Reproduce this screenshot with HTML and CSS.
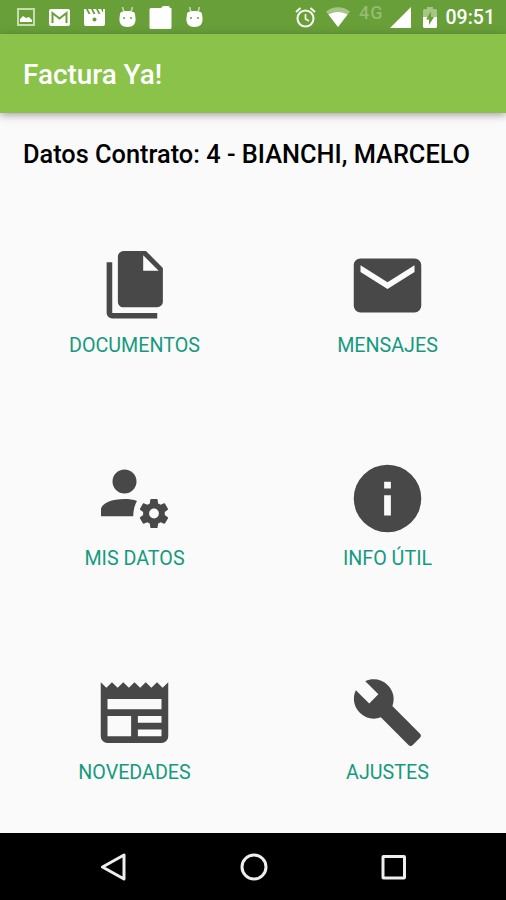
FILE: index.html
```html
<!DOCTYPE html>
<html lang="es">
<head>
  <meta charset="UTF-8">
  <title>Factura Ya!</title>
  <link rel="stylesheet" href="styles.css">
</head>
<body>
  <div class="status-bar">
    <div class="notifications">
      <svg width="18" height="18" viewBox="0 0 18 18">
        <rect x="1" y="1" width="16" height="16" fill="none" stroke="#c6ddb0" stroke-width="2"/>
        <path d="M3 14V11l3-3 3 2 3-1 3 3v2z" fill="#fff"/>
      </svg>
      <svg width="21" height="17" viewBox="0 0 21 17">
        <rect width="21" height="17" rx="2" fill="#fff"/>
        <path d="M3.500 14V4l7 5.500L17.500 4v10" fill="none" stroke="#689f38" stroke-width="2"/>
      </svg>
      <svg width="21" height="18" viewBox="0 0 21 18">
        <path d="M0 1h2l2.500 5h2L4 1h3l2.500 5h2L9 1h3l2.500 5h2L14 1h3l2 4V1h2v15a2 2 0 0 1-2 2H2a2 2 0 0 1-2-2z" fill="#fff"/>
        <circle cx="10.500" cy="11.500" r="2" fill="#689f38"/>
      </svg>
      <svg width="17" height="20" viewBox="0 0 17 20">
        <path d="M3.500 0L5 5M13.500 0L12 5" stroke="#c6ddb0" stroke-width="1.500"/>
        <path d="M1 7c0-2 3-3 7.500-3S16 5 16 7l.6 5c0 5-2.600 8-8.100 8S.4 17 .4 12z" fill="#fff"/>
        <circle cx="5" cy="11" r="1" fill="#689f38"/><circle cx="12" cy="11" r="1" fill="#689f38"/>
      </svg>
      <svg class="folder" width="24" height="23" viewBox="0 0 24 23">
        <path d="M2 2h10l2-2h6l1 2h1.500v19.500a1.500 1.500 0 0 1-1.500 1.500H2a1.500 1.500 0 0 1-1.500-1.500V3.500A1.500 1.500 0 0 1 2 2z" fill="#fff"/>
      </svg>
      <svg width="17" height="20" viewBox="0 0 17 20">
        <path d="M3.500 0L5 5M13.500 0L12 5" stroke="#c6ddb0" stroke-width="1.500"/>
        <path d="M1 7c0-2 3-3 7.500-3S16 5 16 7l.6 5c0 5-2.600 8-8.100 8S.4 17 .4 12z" fill="#fff"/>
        <circle cx="5" cy="11" r="1" fill="#689f38"/><circle cx="12" cy="11" r="1" fill="#689f38"/>
      </svg>
    </div>
    <div class="system">
      <svg class="alarm" width="21" height="21" viewBox="0 0 21 21" fill="none" stroke="#f4f9ef">
        <circle cx="10.500" cy="11.500" r="8" stroke-width="2.100"/>
        <path d="M10.500 7v5l3.500 2" stroke-width="1.700"/>
        <path d="M1 5l4.500-4M20 5l-4.500-4" stroke-width="2"/>
      </svg>
      <svg class="wifi" width="24" height="20" viewBox="0 0 24 20">
        <path d="M0 4.500C7-1.200 17-1.200 24 4.500L12 20z" fill="#a4c687"/>
        <path d="M2.500 7.500c6-3.500 13-3.500 19 0L12 20z" fill="#fff"/>
      </svg>
      <span class="network">4G</span>
      <svg class="signal" width="21" height="21" viewBox="0 0 21 21">
        <path d="M21 0v21H0z" fill="#fff"/>
      </svg>
      <svg class="battery" width="14" height="21" viewBox="0 0 14 21">
        <path d="M4 0h6v2h2.500A1.500 1.500 0 0 1 14 3.500V10H0V3.500A1.500 1.500 0 0 1 1.500 2H4z" fill="#a4c687"/>
        <path d="M0 10h14v9.500a1.500 1.500 0 0 1-1.500 1.500h-11A1.500 1.500 0 0 1 0 19.500z" fill="#fff"/>
        <path d="M8 4.500L3 12.500h3V18l5-8H8z" fill="#689f38"/>
      </svg>
      <span class="clock">09:51</span>
    </div>
  </div>

  <header class="app-bar">
    <h1>Factura Ya!</h1>
  </header>

  <main>
    <h2>Datos Contrato: 4 - BIANCHI, MARCELO</h2>

    <div class="menu">
      <div class="item">
        <div class="icon">
          <svg width="67.500" height="67.500" viewBox="0 0 24 24">
            <path d="M15,7H20.500L15,1.500V7M8,0H16L22,6V18A2,2 0 0,1 20,20H8C6.890,20 6,19.100 6,18V2A2,2 0 0,1 8,0M4,4V22H20V24H4A2,2 0 0,1 2,22V4H4Z"/>
          </svg>
        </div>
        <span class="label">DOCUMENTOS</span>
      </div>

      <div class="item">
        <div class="icon">
          <svg width="81" height="81" viewBox="0 0 24 24">
            <path d="M20,8L12,13L4,8V6L12,11L20,6M20,4H4C2.890,4 2,4.890 2,6V18A2,2 0 0,0 4,20H20A2,2 0 0,0 22,18V6C22,4.890 21.100,4 20,4Z"/>
          </svg>
        </div>
        <span class="label">MENSAJES</span>
      </div>

      <div class="item">
        <div class="icon">
          <svg width="81" height="81" viewBox="0 0 81 81">
            <circle cx="30.500" cy="23.500" r="12"/>
            <path d="M7 58.200V51C8 45 18 41 30.500 41c4.500 0 9 .6 12.500 2-2.300 4.200-3.800 9.200-3.800 15.200z"/>
            <!-- engranaje -->
            <g transform="translate(60 55.500) scale(2.900) translate(-18 -17)">
              <path fill-rule="evenodd" d="M17 12C16.870 12 16.760 12.090 16.740 12.210L16.550 13.530C16.250 13.660 15.960 13.820 15.700 14L14.460 13.500C14.350 13.500 14.220 13.500 14.150 13.630L13.150 15.360C13.090 15.470 13.110 15.600 13.210 15.680L14.270 16.500C14.240 16.830 14.240 17.170 14.270 17.500L13.210 18.320C13.120 18.400 13.090 18.530 13.150 18.640L14.150 20.370C14.210 20.500 14.340 20.500 14.460 20.500L15.700 20C15.960 20.180 16.240 20.350 16.550 20.470L16.740 21.790C16.760 21.910 16.860 22 17 22H19C19.110 22 19.220 21.910 19.240 21.790L19.430 20.470C19.730 20.340 20 20.180 20.270 20L21.500 20.500C21.630 20.500 21.760 20.500 21.830 20.370L22.830 18.640C22.890 18.530 22.860 18.400 22.770 18.320L21.700 17.500C21.740 17.170 21.740 16.830 21.700 16.500L22.760 15.680C22.850 15.600 22.880 15.470 22.820 15.360L21.820 13.630C21.760 13.500 21.630 13.500 21.500 13.500L20.270 14C20 13.820 19.730 13.650 19.420 13.530L19.230 12.210C19.220 12.090 19.110 12 19 12H17M18 15.300A1.700 1.700 0 0 1 18 18.700A1.700 1.700 0 0 1 18 15.300Z"/>
            </g>
          </svg>
        </div>
        <span class="label">MIS DATOS</span>
      </div>

      <div class="item">
        <div class="icon">
          <svg width="81" height="81" viewBox="0 0 24 24">
            <path d="M13,9H11V7H13M13,17H11V11H13M12,2A10,10 0 0,0 2,12A10,10 0 0,0 12,22A10,10 0 0,0 22,12A10,10 0 0,0 12,2Z"/>
          </svg>
        </div>
        <span class="label">INFO ÚTIL</span>
      </div>

      <div class="item">
        <div class="icon">
          <svg width="81" height="81" viewBox="0 0 24 24">
            <path d="M20,11H4V8H20M20,15H13V13H20M20,19H13V17H20M11,19H4V13H11M20.330,4.670L18.670,3L17,4.670L15.330,3L13.670,4.670L12,3L10.330,4.670L8.670,3L7,4.670L5.330,3L3.670,4.670L2,3V19A2,2 0 0,0 4,21H20A2,2 0 0,0 22,19V3L20.330,4.670Z"/>
          </svg>
        </div>
        <span class="label">NOVEDADES</span>
      </div>

      <div class="item">
        <div class="icon">
          <svg width="73" height="73" viewBox="0 0 24 24">
            <path d="M22.700,19L13.600,9.900C14.500,7.600 14,4.900 12.100,3C10.100,1 7.100,0.600 4.700,1.700L9,6L6,9L1.600,4.700C0.400,7.100 0.900,10.100 2.900,12.100C4.800,14 7.500,14.500 9.800,13.600L18.900,22.700C19.300,23.100 19.900,23.100 20.300,22.700L22.600,20.400C23.100,20 23.100,19.300 22.700,19Z"/>
          </svg>
        </div>
        <span class="label">AJUSTES</span>
      </div>
    </div>
  </main>

  <nav class="nav-bar">
    <svg width="28" height="28" viewBox="0 0 28 28">
      <path d="M25 2v24L3.500 14z"/>
    </svg>
    <svg width="28" height="28" viewBox="0 0 28 28">
      <circle cx="14" cy="14" r="12"/>
    </svg>
    <svg width="28" height="28" viewBox="0 0 28 28">
      <rect x="3" y="3.500" width="21.500" height="21.500" rx=".5"/>
    </svg>
  </nav>
</body>
</html>
```

FILE: styles.css
```css
* {
  box-sizing: border-box;
}

body {
  margin: 0;
  height: 900px;
  display: flex;
  flex-direction: column;
  overflow: hidden;
  background: #fafafa;
  font-family: Roboto, "Liberation Sans", sans-serif;
}

svg {
  display: block;
  flex-shrink: 0;
}

/* barra de estado */
.status-bar {
  height: 34px;
  flex-shrink: 0;
  display: flex;
  justify-content: space-between;
  background: #689f38;
}

.notifications {
  display: flex;
  align-items: center;
  gap: 14px;
  padding-left: 17px;
}

.folder {
  margin: 0 -1px;
}

.system {
  display: flex;
  align-items: center;
  padding-right: 11px;
}

.alarm {
  margin-top: 1px;
}

.wifi {
  margin-left: 10px;
}

.network {
  margin: 0 6px 8px 9px;
  font-size: 18px;
  font-weight: 500;
  letter-spacing: 1px;
  line-height: 20px;
  color: #94bc72;
}

.battery {
  margin-left: 12px;
}

.clock {
  margin-left: 9px;
  padding-top: 2px;
  font-size: 19.500px;
  font-weight: 500;
  line-height: 34px;
  color: #fff;
}

/* cabecera */
.app-bar {
  height: 79px;
  flex-shrink: 0;
  display: flex;
  align-items: center;
  padding: 2px 23px 0;
  background: #8bc34a;
  box-shadow: 0 2px 8px rgba(60, 40, 60, 0.45);
}

h1 {
  margin: 0;
  font-size: 27.900px;
  font-weight: 500;
  color: #fff;
}

main {
  height: 720px;
  flex-shrink: 0;
}

h2 {
  margin: 0;
  padding: 24px 23px 0;
  font-size: 25.350px;
  font-weight: 500;
  line-height: 35px;
  color: #000;
  white-space: nowrap;
}

/* menu principal */
.menu {
  display: grid;
  grid-template-columns: 253px 253px;
  grid-template-rows: 213.500px 213.500px 120px;
  padding: 72px 0 0 8px;
}

.item {
  display: flex;
  flex-direction: column;
  align-items: center;
}

.icon {
  height: 82px;
  display: flex;
  align-items: center;
  justify-content: center;
}

.icon svg {
  fill: #484848;
}

.label {
  margin-top: 7.500px;
  font-size: 19.700px;
  line-height: 24px;
  color: #159a80;
  white-space: nowrap;
}

/* barra de navegacion */
.nav-bar {
  height: 67px;
  flex-shrink: 0;
  display: flex;
  align-items: center;
  justify-content: center;
  gap: 112.500px;
  padding-left: 1px;
  background: #000;
}

.nav-bar svg {
  fill: none;
  stroke: #eee;
  stroke-width: 3;
  stroke-linejoin: round;
}
```
